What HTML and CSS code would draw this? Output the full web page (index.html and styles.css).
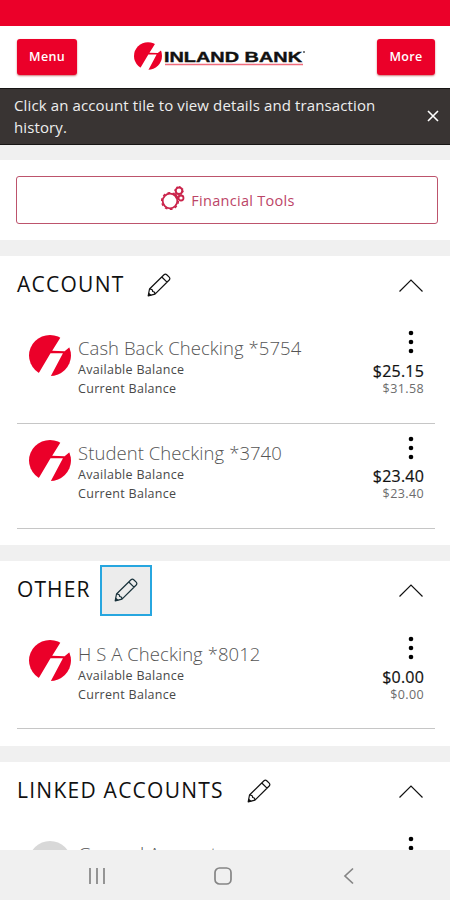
FILE: index.html
```
<!DOCTYPE html>
<html lang="en">
<head>
<meta charset="utf-8">
<title>Inland Bank</title>
<link rel="stylesheet" href="styles.css">
</head>
<body>
<svg class="defs" width="0" height="0" aria-hidden="true">
  <symbol id="mark" viewBox="0 0 125 122">
    <ellipse cx="62.5" cy="61" rx="62.5" ry="61" fill="#eb0029"/>
    <path d="M95 5 69 47 106 48 123 34 132 0ZM64 54H101L64 124H20L31 110Z" fill="#fff"/>
  </symbol>
  <symbol id="pencil" viewBox="0 0 24 24">
    <path d="M1.2 22.8 2.5 16 17 1.8Q18.4.5 20 2L22.2 4.1Q23.5 5.5 22.2 7L8 21.2ZM14.8 4 20 9.2M2.5 16Q6 16.300 5.600 18.500Q8 18.500 8 21.200" fill="none" stroke="currentColor" stroke-width="1.200" stroke-linejoin="round"/>
    <path d="M1 23 1.700 19.500 4.800 22.200Z" fill="currentColor"/>
  </symbol>
  <symbol id="up" viewBox="0 0 24 13"><path d="M.5 12.500 12 1 23.500 12.500" fill="none" stroke="currentColor" stroke-width="1.200"/></symbol>
  <symbol id="dots" viewBox="0 0 6 24"><circle cx="3" cy="3" r="2.300"/><circle cx="3" cy="12" r="2.300"/><circle cx="3" cy="21" r="2.300"/></symbol>
</svg>
<div class="screen">
  <div class="status"></div>
  <header class="top">
    <button class="btn menu">Menu</button>
    <svg class="brand" viewBox="0 0 172 30">
      <use href="#mark" x="0" y="1" width="28" height="28"/>
      <text x="30" y="20.500" textLength="138" lengthAdjust="spacingAndGlyphs">INLAND BANK</text>
      <circle cx="170" cy="11" r="1" fill="#555"/>
      <path d="M31 23.500H169" stroke="#f06c7d" stroke-width="1.500"/>
    </svg>
    <button class="btn more">More</button>
  </header>
  <div class="notice">
    <p>Click an account tile to view details and transaction<br>history.</p>
    <svg class="close" viewBox="0 0 12 12"><path d="M1 1 11 11M11 1 1 11" stroke="#fff" stroke-width="1.600"/></svg>
  </div>
  <main>
    <section class="tools">
      <button class="tool-btn">
        <svg class="gears" viewBox="0 0 24 24" fill="none" stroke="#ca244b">
          <circle cx="9" cy="15" r="7.300" stroke-width="1.800"/>
          <circle cx="9" cy="15" r="8.300" stroke-width="1.500" stroke-dasharray="2.700 2.500"/>
          <circle cx="18" cy="4.800" r="3.300" stroke-width="2"/>
          <circle cx="18" cy="4.800" r="4.300" stroke-width="1" stroke-dasharray="1.600 1.700"/>
          <circle cx="20" cy="12" r="2.500" stroke-width="1.800"/>
          <path d="M14.500 7.500 16 13" stroke-width="2"/>
        </svg>
        <span>Financial Tools</span>
      </button>
    </section>

    <section class="group">
      <div class="head"><h2 class="h-account">ACCOUNT</h2><span class="edit"><svg><use href="#pencil"/></svg></span><svg class="up"><use href="#up"/></svg></div>
      <article class="row">
        <svg class="avatar"><use href="#mark"/></svg>
        <div class="info"><h3>Cash Back Checking *5754</h3><p>Available Balance</p><p>Current Balance</p></div>
        <div class="sums"><svg class="dots"><use href="#dots"/></svg><strong>$25.15</strong><span>$31.58</span></div>
      </article>
      <article class="row second">
        <svg class="avatar"><use href="#mark"/></svg>
        <div class="info"><h3>Student Checking *3740</h3><p>Available Balance</p><p>Current Balance</p></div>
        <div class="sums"><svg class="dots"><use href="#dots"/></svg><strong>$23.40</strong><span>$23.40</span></div>
      </article>
    </section>

    <section class="group other">
      <div class="head"><h2 class="h-other">OTHER</h2><span class="edit focused"><svg><use href="#pencil"/></svg></span><svg class="up"><use href="#up"/></svg></div>
      <article class="row">
        <svg class="avatar"><use href="#mark"/></svg>
        <div class="info"><h3>H S A Checking *8012</h3><p>Available Balance</p><p>Current Balance</p></div>
        <div class="sums"><svg class="dots"><use href="#dots"/></svg><strong>$0.00</strong><span>$0.00</span></div>
      </article>
    </section>

    <section class="group linked">
      <div class="head"><h2 class="h-linked">LINKED ACCOUNTS</h2><span class="edit"><svg><use href="#pencil"/></svg></span><svg class="up"><use href="#up"/></svg></div>
      <article class="row">
        <div class="avatar blank"></div>
        <div class="info"><h3>General Account</h3></div>
        <div class="sums"><svg class="dots"><use href="#dots"/></svg></div>
      </article>
    </section>
  </main>
  <nav class="keys">
    <svg viewBox="0 0 18 18"><path d="M2 1V17M9 1V17M16 1V17"/></svg>
    <svg viewBox="0 0 18 18"><rect x="1" y="1" width="16" height="16" rx="4.500"/></svg>
    <svg viewBox="0 0 18 18"><path d="M13 1.500 5 9 13 16.500"/></svg>
  </nav>
</div>
</body>
</html>
```
FILE: styles.css
```
* { box-sizing: border-box; margin: 0; padding: 0; }
body { background: #fff; font-family: "Open Sans", sans-serif; color: #111; }
svg { display: block; flex: none; }
.defs { position: absolute; }
.screen { width: 450px; height: 900px; overflow: hidden; display: flex; flex-direction: column; }
.status { height: 26px; flex: none; background: #eb0029; }
.top { height: 62px; flex: none; display: flex; align-items: flex-start; padding: 13px 15px 0 17px; background: #fff; }
.btn { height: 36px; border: 0; border-radius: 3px; background: #eb0029; color: #fff; font: 600 12.500px/34px "Open Sans", sans-serif; letter-spacing: .3px; box-shadow: 0 1px 2px #c77; }
.menu { width: 60px; }
.more { width: 58px; margin-left: auto; }
.brand { width: 172px; height: 30px; margin: 2px 0 0 57px; }
.brand text { font: bold 15.500px "Liberation Sans", sans-serif; fill: #111; stroke: #111; stroke-width: .4; }
.notice { height: 57px; flex: none; display: flex; justify-content: space-between; background: #393433; border-top: 1px solid #171514; border-bottom: 1px solid #171514; padding: 6px 11px 0 14px; color: #eee; }
.notice p { font-size: 15px; line-height: 21.500px; letter-spacing: .12px; white-space: nowrap; }
.close { width: 12px; height: 12px; margin-top: 15px; }
main { flex: 1; min-height: 0; overflow: hidden; display: flex; flex-direction: column; gap: 16px; background: #f0f0f0; padding-top: 15px; }
.tools { height: 80px; flex: none; background: #fff; padding: 16px 12px 0 16px; }
.tool-btn { width: 100%; height: 48px; display: flex; justify-content: center; align-items: center; gap: 6px; background: #fff; border: 1.500px solid #bd536c; border-radius: 3px; padding-left: 2px; color: #bc4567; font: 14.500px "Open Sans", sans-serif; letter-spacing: .3px; }
.gears { width: 24px; height: 24px; margin-top: -5px; }
.group { height: 289px; flex: none; background: #fff; padding: 0 15px 0 17px; }
.group.other { height: 185px; }
.group.linked { height: 200px; }
.head { height: 62px; display: flex; align-items: flex-start; padding: 4px 12px 0 0; }
.head h2 { font-size: 21px; line-height: 49px; font-weight: 400; white-space: nowrap; }
.h-account { width: 116px; letter-spacing: 1.250px; }
.h-other { width: 83px; letter-spacing: 1.100px; }
.h-linked { width: 216px; letter-spacing: 1.250px; }
.edit { width: 52px; height: 51px; display: flex; align-items: center; justify-content: center; }
.edit svg { width: 24px; height: 24px; margin-top: -1px; }
.focused { background: #ececec; border: 2px solid #27a6df; color: #18313a; }
.up { width: 24px; height: 13px; margin: 19px 0 0 auto; }
.row { height: 106px; display: flex; border-bottom: 1px solid #c6c6c6; padding: 0 11px 0 12px; }
.row.second { height: 105px; }
.avatar { width: 42px; height: 41px; margin-top: 17px; }
.blank { background: #d8d8d8; border-radius: 50%; }
.info { margin-left: 7px; padding-top: 18px; white-space: nowrap; }
.info h3 { font-size: 18.500px; line-height: 24px; font-weight: 300; letter-spacing: .06px; color: #555; }
.info p { font-size: 12.500px; line-height: 19px; letter-spacing: .3px; color: #484848; }
.second .info { padding-top: 17px; }
.second .avatar { margin-top: 16px; }
.other .info, .other .sums { position: relative; top: 1px; }
.sums { margin-left: auto; display: flex; flex-direction: column; align-items: flex-end; padding-top: 12px; }
.dots { width: 6px; height: 24px; margin-right: 10px; }
.sums strong { font-size: 16px; line-height: 20px; font-weight: 500; letter-spacing: .2px; margin-top: 7px; -webkit-text-stroke: .2px #111; }
.sums span { font-size: 12.500px; line-height: 16px; letter-spacing: .4px; color: #6c6c6c; }
.second .sums strong { margin-top: 6px; }
.keys { height: 50px; flex: none; display: flex; align-items: center; justify-content: space-between; padding: 2px 92px 0 88px; background: #f0f0f0; }
.keys svg { width: 18px; height: 18px; fill: none; stroke: #858585; stroke-width: 1.700; }
```
